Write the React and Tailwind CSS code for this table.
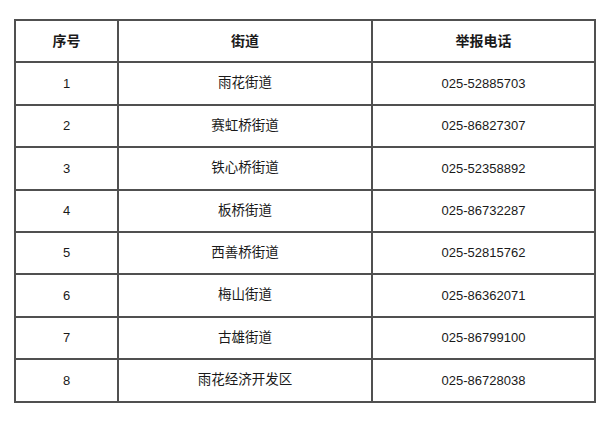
const rows = [
  ["1", "雨花街道", "025-52885703"],
  ["2", "赛虹桥街道", "025-86827307"],
  ["3", "铁心桥街道", "025-52358892"],
  ["4", "板桥街道", "025-86732287"],
  ["5", "西善桥街道", "025-52815762"],
  ["6", "梅山街道", "025-86362071"],
  ["7", "古雄街道", "025-86799100"],
  ["8", "雨花经济开发区", "025-86728038"],
];

export default function App() {
  return (
    <div
      className="w-[607px] h-[439px] bg-white pt-[19px] pl-[14px] text-[#1a1a1a]"
      style={{ fontFamily: '"Liberation Sans", "Noto Sans CJK SC", sans-serif' }}
    >
      <table className="border-collapse border-2 border-[#505050] text-[13px] text-center">
        <colgroup>
          <col className="w-[103px]" />
          <col className="w-[254px]" />
          <col className="w-[223px]" />
        </colgroup>
        <thead>
          <tr className="h-[42.4px] text-[14px]">
            <th className="border-2 border-[#505050] font-bold p-0">序号</th>
            <th className="border-2 border-[#505050] font-bold p-0">街道</th>
            <th className="border-2 border-[#505050] font-bold p-0">举报电话</th>
          </tr>
        </thead>
        <tbody>
          {rows.map((r) => (
            <tr key={r[0]} className="h-[42.4px]">
              <td className="border-2 border-[#505050] p-0">{r[0]}</td>
              <td className="border-2 border-[#505050] p-0 text-[13.5px]">{r[1]}</td>
              <td className="border-2 border-[#505050] p-0">{r[2]}</td>
            </tr>
          ))}
        </tbody>
      </table>
    </div>
  );
}
